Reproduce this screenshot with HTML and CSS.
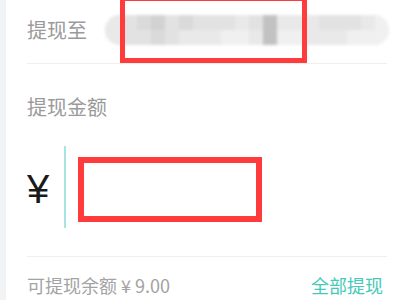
FILE: index.html
```html
<!DOCTYPE html>
<html lang="zh">
<head>
<meta charset="utf-8">
<link rel="stylesheet" href="styles.css">
</head>
<body>
<div class="page">
  <div class="strip"></div>
  <div class="content">
    <div class="row-to">
      <span class="label">提现至</span>
      <div class="blur">
        <div class="mrow">
          <i class="s1 w"></i><i class="s2"></i><i class="s3"></i><i class="s4"></i><i class="s2"></i><i class="s3"></i><i class="s2"></i><i class="s2"></i><i class="s2"></i><i class="s1"></i><i class="s2"></i><i class="s5"></i><i class="s1"></i><i class="s1"></i><i class="s1"></i><i class="s2"></i><i class="s2"></i><i class="s2"></i><i class="s1"></i><i class="s0"></i>
        </div>
        <div class="mrow">
          <i class="s1 w"></i><i class="s2"></i><i class="s2"></i><i class="s3"></i><i class="s2"></i><i class="s1"></i><i class="s1"></i><i class="s1"></i><i class="s0"></i><i class="s0"></i><i class="s1"></i><i class="s5"></i><i class="s0"></i><i class="s0"></i><i class="s1"></i><i class="s1"></i><i class="s1"></i><i class="s0"></i><i class="s0"></i><i class="s0"></i>
        </div>
      </div>
      <div class="mark mark-top"></div>
    </div>
    <div class="row-amount">
      <div class="label amount-label">提现金额</div>
      <div class="input-row">
        <span class="yen">¥</span>
        <span class="caret"></span>
        <div class="mark mark-input"></div>
      </div>
    </div>
    <div class="row-foot">
      <span class="balance">可提现余额 ¥ 9.00</span>
      <span class="all">全部提现</span>
    </div>
  </div>
</div>
</body>
</html>
```

FILE: styles.css
```css
html, body {
  margin: 0;
  padding: 0;
  background: #ffffff;
  font-family: "Noto Sans CJK SC", "Noto Sans", "Liberation Sans", sans-serif;
}
.page {
  display: flex;
  width: 400px;
  height: 300px;
  overflow: hidden;
}
.strip {
  width: 6px;
  flex: none;
  background: #f2f3f5;
}
.content {
  flex: 1;
  padding: 0 15px 0 21px;
  display: flex;
  flex-direction: column;
}
.label {
  font-size: 20px;
  color: #9a9a9a;
  line-height: 1;
}
.row-to {
  position: relative;
  height: 64px;
  border-bottom: 1px solid #efefef;
  display: flex;
  align-items: center;
  padding-bottom: 4px;
  box-sizing: border-box;
}
.row-to .label {
  width: 78px;
  flex: none;
}
.blur {
  flex: 1;
  height: 30px;
  border-radius: 15px;
  overflow: hidden;
  display: flex;
  flex-direction: column;
  filter: blur(1.5px);
  background: #ececec;
  margin-right: -2px;
}
.mrow {
  display: flex;
  flex: 1;
}
.mrow i {
  width: 14px;
  flex: none;
}
.mrow i.w {
  width: 18px;
}
.s0 { background: #f0f0f0; }
.s1 { background: #e9e9e9; }
.s2 { background: #e2e2e2; }
.s3 { background: #dadada; }
.s4 { background: #d2d2d2; }
.s5 { background: #c2c2c2; }
.mark {
  position: absolute;
  border: 5px solid #ff3b3b;
  box-sizing: border-box;
}
.mark-top {
  left: 93px;
  top: -4px;
  width: 187px;
  height: 67px;
}
.row-amount {
  height: 193px;
  border-bottom: 1px solid #efefef;
  box-sizing: border-box;
  display: flex;
  flex-direction: column;
}
.amount-label {
  margin-top: 33px;
}
.input-row {
  position: relative;
  margin-top: 29px;
  height: 82px;
  display: flex;
  align-items: center;
}
.yen {
  font-family: "Liberation Sans", sans-serif;
  font-size: 40px;
  color: #1a1a1a;
  width: 37px;
  line-height: 1;
  margin-left: 0;
  padding-top: 4px;
}
.caret {
  align-self: stretch;
  width: 2px;
  background: #a9e5e0;
}
.mark-input {
  border-width: 6px;
  left: 51px;
  top: 11px;
  width: 184px;
  height: 65px;
}
.row-foot {
  flex: 1;
  display: flex;
  align-items: center;
  justify-content: space-between;
  padding-top: 12px;
  font-size: 18px;
  line-height: 1;
}
.balance {
  color: #a3a3a3;
}
.all {
  color: #45c9b8;
  margin-right: 4px;
}
```
